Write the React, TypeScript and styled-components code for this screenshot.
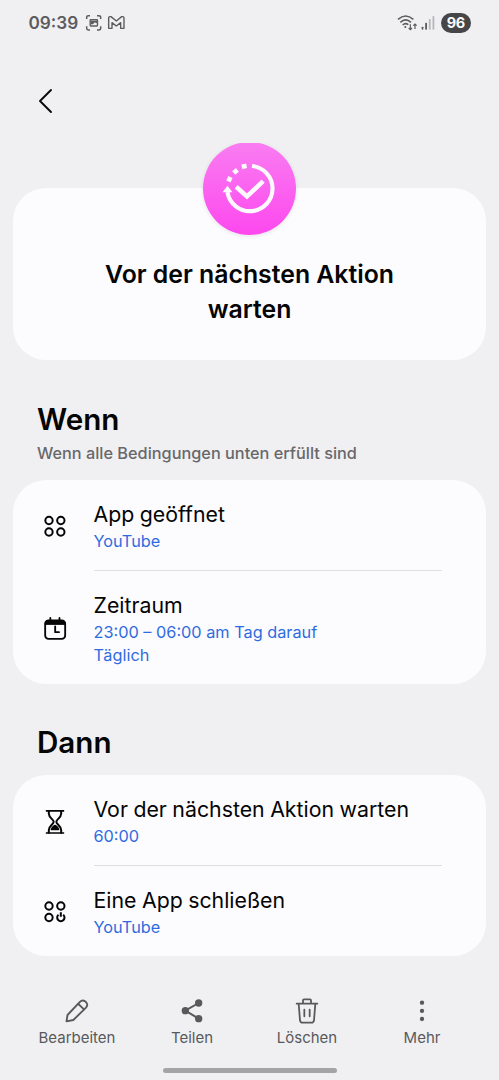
import React from "react";
import styled, { createGlobalStyle } from "styled-components";

const GlobalStyle = createGlobalStyle`
  * { box-sizing: border-box; }
  body { margin: 0; background: #f0f0f2; }
`;

const Screen = styled.div`
  width: 499px;
  height: 1080px;
  display: flex;
  flex-direction: column;
  overflow: hidden;
  background: #f0f0f2;
  color: #050505;
  font-family: Inter, Roboto, sans-serif;
`;

const StatusBar = styled.header`
  height: 46px;
  flex: none;
  display: flex;
  justify-content: space-between;
  align-items: center;
  padding: 0 28.4px;
  color: #5c5c5f;
`;

const StatusGroup = styled.div`
  display: flex;
  align-items: center;
`;

const Clock = styled.span`
  width: 57px;
  font-size: 17.2px;
  font-weight: 600;
  line-height: 22px;
`;

const Battery = styled.span`
  width: 29.5px;
  height: 19.5px;
  margin-left: 6px;
  border-radius: 10px;
  background: #464648;
  color: #fafafc;
  font-size: 14.5px;
  font-weight: 700;
  letter-spacing: -0.3px;
  line-height: 19.5px;
  text-align: center;
`;

const AppBar = styled.nav`
  height: 97px;
  flex: none;
  display: flex;
  align-items: center;
  padding: 13px 0 0 34px;
`;

const BackButton = styled.button`
  display: flex;
  padding: 0;
  border: 0;
  background: none;
`;

const Content = styled.main`
  height: 841px;
  flex: none;
  overflow: hidden;
  padding: 45.2px 13px 0;
`;

const Card = styled.section`
  border-radius: 33px;
  background: #fcfcfe;
`;

const HeroCard = styled(Card)`
  height: 171.8px;
  display: flex;
  flex-direction: column;
  align-items: center;
`;

const Disc = styled.div`
  width: 93.6px;
  height: 93.6px;
  flex: none;
  margin-top: -46.6px;
  border-radius: 50%;
  background: linear-gradient(#f97df1, #fd48ee);
  box-shadow: 0 1px 4px rgba(0, 0, 0, 0.1);
`;

const Title = styled.h1`
  width: 320px;
  margin: 21.6px 0 0;
  font-size: 24.8px;
  font-weight: 600;
  line-height: 35px;
  text-align: center;
`;

const SectionHead = styled.div<{ $top: number; $bottom: number }>`
  padding: ${(p) => p.$top}px 24px ${(p) => p.$bottom}px;
`;

const Heading = styled.h2`
  margin: 0;
  font-size: 29.6px;
  font-weight: 600;
  line-height: 36px;
`;

const Subheading = styled.p`
  margin: 5.2px 0 0;
  color: #68686b;
  font-size: 16.3px;
  font-weight: 500;
  line-height: 22px;
`;

const Row = styled.div`
  display: flex;
  align-items: center;
  padding: 0 44.5px 0 27.5px;
`;

const RowText = styled.div<{ $divided?: boolean }>`
  flex: 1;
  margin-left: 25px;
  padding: 19.8px 0 17.4px;
  border-bottom: ${(p) => (p.$divided ? "1px solid #dedee0" : "0")};
`;

const RowTitle = styled.div`
  margin-bottom: 1.9px;
  font-size: 21.3px;
  word-spacing: -0.5px;
  line-height: 28px;
`;

const RowValue = styled.div`
  color: #2f6be0;
  font-size: 16.3px;
  line-height: 22.8px;
`;

const Toolbar = styled.footer`
  height: 84px;
  flex: none;
  display: grid;
  grid-template-columns: repeat(4, 115px);
  justify-content: center;
  padding-top: 13px;
`;

const ToolButton = styled.button`
  display: flex;
  flex-direction: column;
  align-items: center;
  padding: 0;
  border: 0;
  background: none;
  color: #59595c;
  font: 400 15px/20px Inter, Roboto, sans-serif;
`;

const ToolLabel = styled.span`
  margin-top: 2.5px;
`;

const HomeHandle = styled.div`
  width: 174px;
  height: 5px;
  flex: none;
  align-self: center;
  border-radius: 3px;
  background: #a4a4a6;
`;

const Glyph = ({ stroke = 6, children }: { stroke?: number; children: React.ReactNode }) => (
  <svg width="28" height="28" viewBox="0 0 84 84" fill="none" stroke="currentColor" strokeWidth={stroke} strokeLinecap="round" strokeLinejoin="round">
    {children}
  </svg>
);

const AppsGlyph = () => (
  <Glyph>
    <circle cx="24" cy="25.5" r="11" />
    <circle cx="59.5" cy="25.5" r="11" />
    <circle cx="24" cy="60" r="11" />
    <circle cx="59.5" cy="60" r="11" />
  </Glyph>
);

const CloseAppGlyph = () => (
  <Glyph>
    <circle cx="24" cy="27" r="11" />
    <circle cx="59.5" cy="27" r="11" />
    <circle cx="24" cy="61.5" r="11" />
    <path d="M52.5 53A11 11 0 1 0 66.5 53M59.5 46V59" strokeLinecap="butt" />
  </Glyph>
);

const CalendarGlyph = () => (
  <Glyph stroke={5.5}>
    <rect x="12.5" y="19.5" width="60" height="55" rx="10" />
    <path d="M12.5 30V28Q13 19.5 22 19.5H63Q72 19.5 72.5 28V30Z" fill="currentColor" strokeWidth="3" />
    <path d="M28 12V20M55.5 12V20M42.5 37V54.5H54" />
  </Glyph>
);

const HourglassGlyph = () => (
  <Glyph>
    <path d="M17 11.5H67M17 78H67" strokeLinecap="square" strokeWidth="5" />
    <path d="M23.5 12V20C24 33 38 37 38 44.5S24 56 23.5 69V77M60.5 12V20C60 33 46 37 46 44.5S60 56 60.5 69V77" />
    <path d="M31 68Q32 60 42 55Q52 60 53 68Z" fill="currentColor" strokeWidth="4" />
  </Glyph>
);

const PencilGlyph = () => (
  <Glyph stroke={5.6}>
    <path d="M10.5 73L13.5 54L50 15.5Q58 7 66 12.5L70 16.5Q76 24 69 32L31 69Z" />
    <path d="M46 21L63 37" />
  </Glyph>
);

const ShareGlyph = () => (
  <Glyph stroke={6}>
    <path d="M62 18L22 41L62 65" />
    <g fill="currentColor" stroke="none">
      <circle cx="62" cy="18" r="11" />
      <circle cx="22" cy="41" r="11" />
      <circle cx="62" cy="65" r="11" />
    </g>
  </Glyph>
);

const TrashGlyph = () => (
  <Glyph stroke={5.4}>
    <path d="M11 20H73M30 19V10Q30 7 33 7H51Q54 7 54 10V19M17 20L21 70Q22 77 29 77H55Q62 77 63 70L67 20M34 38V58M50 38V58" />
  </Glyph>
);

const MoreGlyph = () => (
  <Glyph>
    <g fill="currentColor" stroke="none">
      <circle cx="42" cy="17" r="6.5" />
      <circle cx="42" cy="41.5" r="6.5" />
      <circle cx="42" cy="66" r="6.5" />
    </g>
  </Glyph>
);

const BackGlyph = () => (
  <svg width="24" height="28" viewBox="0 0 24 28" fill="none" stroke="#0a0a0a" strokeWidth="1.9" strokeLinecap="round" strokeLinejoin="round">
    <path d="M17 3L6 14L17 25" />
  </svg>
);

const CaptureGlyph = () => (
  <svg width="18" height="18" viewBox="0 0 54 54" fill="none" stroke="currentColor" strokeWidth="4.5">
    <path d="M5 15V10Q5 5 10 5H15M36 5H41Q47 5 47 10V15M47 37V43Q47 48 41 48H36M15 48H10Q5 48 5 43V37" />
    <rect x="15.5" y="17" width="22" height="19" rx="2" strokeWidth="4" />
    <path d="M17 20H36V27L29 25L24 30L17 31Z" fill="currentColor" strokeWidth="1" />
  </svg>
);

const MailIcon = styled.svg`
  margin-left: 2.2px;
`;

const MailGlyph = () => (
  <MailIcon width="20" height="18" viewBox="0 0 60 54" fill="none" stroke="currentColor" strokeWidth="4.2" strokeLinejoin="round">
    <path d="M8 12Q8 8 12 8H15L31 21L47 8H50Q54 8 54 12V43H44V26L31 36L18 26V43H8Z" />
  </MailIcon>
);

const SignalGlyphs = () => (
  <svg width="38" height="20" viewBox="0 0 114 60" fill="none" stroke="#5c5c5f" strokeWidth="4.8" strokeLinecap="butt">
    <path d="M3 19Q26 -1 49 19M10 28Q26 13 42 28M17 36Q25 28 34 35" />
    <circle cx="25" cy="42" r="3.2" fill="#5c5c5f" stroke="none" />
    <g strokeWidth="3.6">
      <path d="M40 34V50M35 45L40 50L45 45M54 48V33M49 38L54 33L59 38" />
    </g>
    <g stroke="none" fill="#5c5c5f">
      <rect x="74" y="41" width="5" height="9" rx="2" />
      <rect x="84.500" y="29" width="5.500" height="21" rx="2" />
      <rect x="95.500" y="18" width="5.500" height="32" rx="2" fill="#b8b8ba" />
      <rect x="106.500" y="9" width="5.500" height="41" rx="2" fill="#b8b8ba" />
    </g>
  </svg>
);

const WaitGlyph = () => (
  <svg width="93.6" height="93.6" viewBox="39.6 35.6 280.8 280.8" fill="none" stroke="#fdfafd" strokeWidth="12.5">
    <path d="M186.5 107.500A68 68 0 1 1 113 186" />
    <path d="M139 170L171.500 199L220 153" strokeWidth="13.5" />
    <g fill="#fdfafd" stroke="none">
      <path d="M113 167L128 186H98Z" />
      <rect x="156" y="101.500" width="14.500" height="14" transform="rotate(-14 163 108.5)" />
      <rect x="130" y="117" width="14.500" height="14" transform="rotate(-40 137 124)" />
      <rect x="112" y="140" width="14" height="14.500" transform="rotate(25 119 147)" />
    </g>
  </svg>
);

type RoutineItem = { icon: React.ReactNode; title: string; values: string[] };

const conditions: RoutineItem[] = [
  { icon: <AppsGlyph />, title: "App geöffnet", values: ["YouTube"] },
  { icon: <CalendarGlyph />, title: "Zeitraum", values: ["23:00 – 06:00 am Tag darauf", "Täglich"] },
];

const actions: RoutineItem[] = [
  { icon: <HourglassGlyph />, title: "Vor der nächsten Aktion warten", values: ["60:00"] },
  { icon: <CloseAppGlyph />, title: "Eine App schließen", values: ["YouTube"] },
];

const tools = [
  { icon: <PencilGlyph />, label: "Bearbeiten" },
  { icon: <ShareGlyph />, label: "Teilen" },
  { icon: <TrashGlyph />, label: "Löschen" },
  { icon: <MoreGlyph />, label: "Mehr" },
];

const RoutineList = ({ items }: { items: RoutineItem[] }) => (
  <Card>
    {items.map((item, index) => (
      <Row key={item.title}>
        {item.icon}
        <RowText $divided={index < items.length - 1}>
          <RowTitle>{item.title}</RowTitle>
          {item.values.map((value) => (
            <RowValue key={value}>{value}</RowValue>
          ))}
        </RowText>
      </Row>
    ))}
  </Card>
);

export default function App() {
  return (
    <Screen>
      <GlobalStyle />
      <StatusBar>
        <StatusGroup>
          <Clock>09:39</Clock>
          <CaptureGlyph />
          <MailGlyph />
        </StatusGroup>
        <StatusGroup>
          <SignalGlyphs />
          <Battery>96</Battery>
        </StatusGroup>
      </StatusBar>
      <AppBar>
        <BackButton aria-label="Zurück">
          <BackGlyph />
        </BackButton>
      </AppBar>
      <Content>
        <HeroCard>
          <Disc>
            <WaitGlyph />
          </Disc>
          <Title>Vor der nächsten Aktion warten</Title>
        </HeroCard>
        <SectionHead $top={41.2} $bottom={16.1}>
          <Heading>Wenn</Heading>
          <Subheading>Wenn alle Bedingungen unten erfüllt sind</Subheading>
        </SectionHead>
        <RoutineList items={conditions} />
        <SectionHead $top={40.3} $bottom={15.2}>
          <Heading>Dann</Heading>
        </SectionHead>
        <RoutineList items={actions} />
      </Content>
      <Toolbar>
        {tools.map((tool) => (
          <ToolButton key={tool.label}>
            {tool.icon}
            <ToolLabel>{tool.label}</ToolLabel>
          </ToolButton>
        ))}
      </Toolbar>
      <HomeHandle />
    </Screen>
  );
}
